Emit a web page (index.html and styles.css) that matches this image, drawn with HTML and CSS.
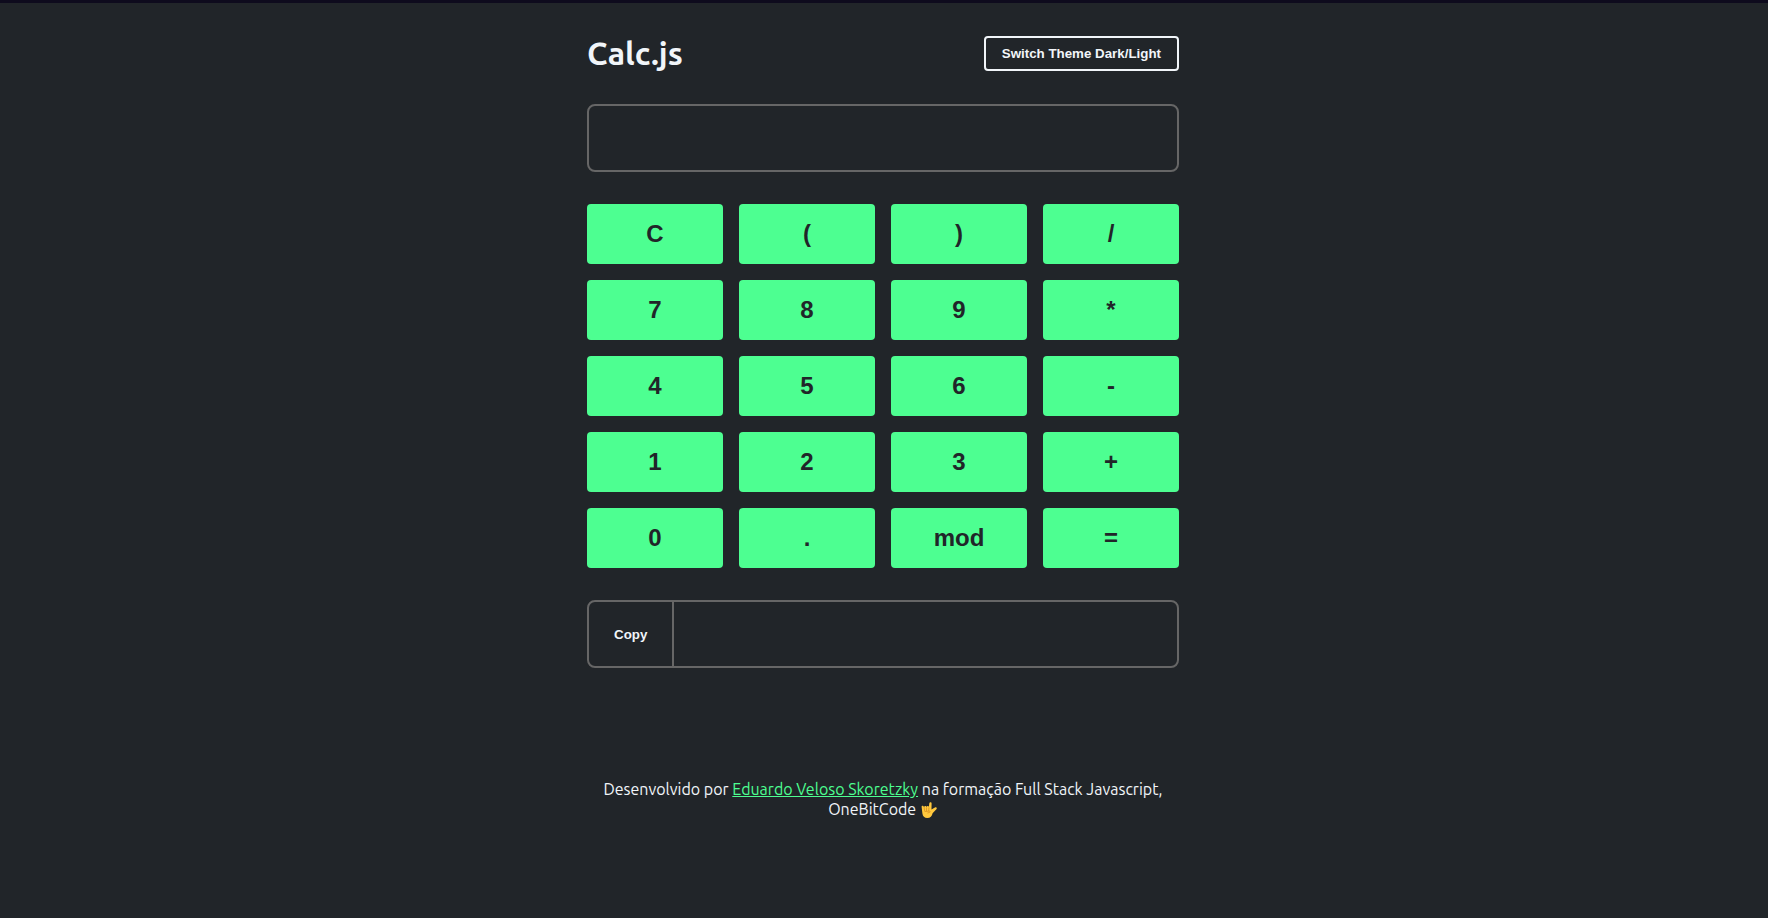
FILE: index.html
```
<!DOCTYPE html>
<html lang="pt-BR">
<head>
<meta charset="UTF-8">
<meta name="viewport" content="width=device-width, initial-scale=1">
<title>Calc.js</title>
<link rel="stylesheet" href="styles.css">
</head>
<body>
<main class="calculator">
  <header class="header">
    <h1 class="title">Calc.js</h1>
    <button type="button" class="theme-switcher">Switch Theme Dark/Light</button>
  </header>
  <input type="text" class="display" aria-label="Expression">
  <div class="keys">
    <button type="button" class="key">C</button>
    <button type="button" class="key">(</button>
    <button type="button" class="key">)</button>
    <button type="button" class="key">/</button>
    <button type="button" class="key">7</button>
    <button type="button" class="key">8</button>
    <button type="button" class="key">9</button>
    <button type="button" class="key">*</button>
    <button type="button" class="key">4</button>
    <button type="button" class="key">5</button>
    <button type="button" class="key">6</button>
    <button type="button" class="key">-</button>
    <button type="button" class="key">1</button>
    <button type="button" class="key">2</button>
    <button type="button" class="key">3</button>
    <button type="button" class="key">+</button>
    <button type="button" class="key">0</button>
    <button type="button" class="key">.</button>
    <button type="button" class="key">mod</button>
    <button type="button" class="key">=</button>
  </div>
  <div class="result-group">
    <button type="button" class="copy">Copy</button>
    <input type="text" class="result" aria-label="Result" readonly>
  </div>
</main>
<footer class="footer">
  <p class="credits">Desenvolvido por <a href="#">Eduardo Veloso Skoretzky</a> na formação Full Stack Javascript, OneBitCode <svg class="hand" viewBox="0 0 16 16" role="img" aria-label="Love-you gesture"><path fill="#ffc83d" d="M.6 4.800c0-1.300 1.900-1.500 2.200 0l.4 1V5c.1-1.300 2.100-1.300 2.300 0 .3-1.400 2.200-1.300 2.400 0L8.300 1.300C8.500-.1 10.700 0 10.600 1.500l-.1 6 3.400-2.100c1.400-.7 2.500.8 1.500 1.800l-3.800 4c-.6 3-2.300 4.800-5.300 4.800-2.900 0-4.500-1.800-4.900-4.600z"/><path fill="none" stroke="#d28a1e" stroke-width=".7" stroke-linecap="round" d="M3.200 6l.5 2.800M5.500 5.800v2.900M7.900 5.800l-.2 2.900M4 9.500l4.300-.4c1 0 1.300 1 .3 1.300l-1.800.5"/></svg></p>
</footer>
</body>
</html>
```
FILE: styles.css
```
:root {
  --bg: #212529;
  --text: #f1f5f9;
  --border: #666666;
  --accent: #4dff91;
}

* {
  box-sizing: border-box;
  margin: 0;
}

body {
  min-height: 100vh;
  padding-right: 2px;
  border-top: 3px solid #0e0b1d;
  background: var(--bg);
  color: var(--text);
  font-family: Ubuntu, "Noto Sans", sans-serif;
  font-size: 16px;
}

button,
input {
  font-family: "Liberation Sans", Arial, sans-serif;
}

.calculator,
.footer {
  max-width: 640px;
  margin: 0 auto;
  padding: 0 24px;
}

.calculator {
  display: flex;
  flex-direction: column;
  gap: 32px;
  padding-top: 32px;
}

.header {
  display: flex;
  align-items: center;
  justify-content: space-between;
}

.title {
  font-size: 32px;
  line-height: 37px;
}

.theme-switcher {
  padding: 8px 16px;
  border: 2px solid var(--text);
  border-radius: 4px;
  background: var(--bg);
  color: var(--text);
  font-weight: bold;
}

.display,
.result-group {
  height: 68px;
  border: 2px solid var(--border);
  border-radius: 8px;
  background: var(--bg);
}

.display {
  width: 100%;
  padding: 16px;
  color: var(--text);
  font-size: 24px;
}

.keys {
  display: grid;
  grid-template-columns: repeat(4, 1fr);
  gap: 16px;
}

.key {
  height: 60px;
  padding: 0;
  border: none;
  border-radius: 4px;
  background: var(--accent);
  color: var(--bg);
  font-size: 24px;
  font-weight: bold;
}

.result-group {
  display: flex;
  overflow: hidden;
}

.copy {
  padding: 0 25px;
  border: none;
  border-right: 2px solid var(--border);
  background: transparent;
  color: var(--text);
  font-weight: bold;
}

.result {
  flex: 1;
  min-width: 0;
  padding: 16px;
  border: none;
  background: transparent;
  color: var(--text);
  font-size: 24px;
}

.footer {
  margin-top: 111px;
}

.credits {
  line-height: 20px;
  text-align: center;
}

.credits a {
  color: var(--accent);
}

.hand {
  width: 18px;
  height: 16px;
  vertical-align: text-bottom;
}
```
